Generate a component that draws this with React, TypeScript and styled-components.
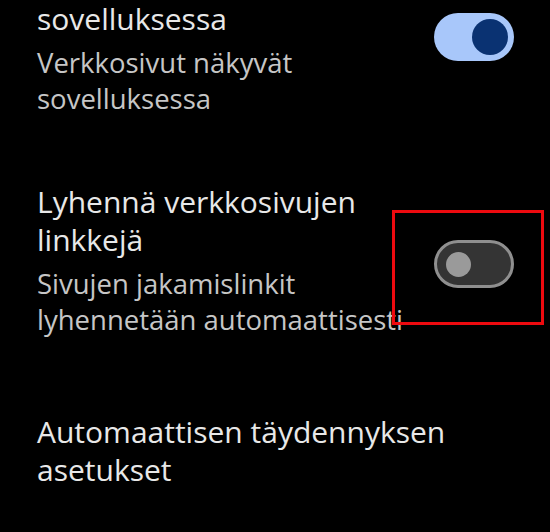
import React from "react";
import styled, { createGlobalStyle } from "styled-components";

const Global = createGlobalStyle`
  html, body {
    margin: 0;
    padding: 0;
    background: #000;
  }
  body {
    width: 550px;
    height: 532px;
    overflow: hidden;
    font-family: "Open Sans", Roboto, "Noto Sans", "Liberation Sans", sans-serif;
    -webkit-font-smoothing: antialiased;
  }
`;

const Screen = styled.div`
  position: relative;
  width: 550px;
  height: 532px;
  overflow: hidden;
  background: #000;
`;

const List = styled.div`
  display: flex;
  flex-direction: column;
`;

const Row = styled.div<{ $align?: "start" | "center"; $top?: number }>`
  display: flex;
  align-items: ${(p) => (p.$align === "start" ? "flex-start" : "center")};
  padding: ${(p) => (p.$top ?? 33)}px 36px 33px 37px;
`;

const TextCol = styled.div`
  flex: 1;
  min-width: 0;
  display: flex;
  flex-direction: column;
  gap: 7px;
`;

const Title = styled.div`
  font-size: 30px;
  line-height: 38px;
  color: #e8e8e8;
  font-weight: 400;
`;

const Subtitle = styled.div`
  font-size: 27.5px;
  line-height: 36px;
  color: #c6c6c6;
  font-weight: 400;
`;

const Track = styled.div<{ $on: boolean; $offset?: number }>`
  flex: none;
  box-sizing: border-box;
  width: 80px;
  height: 48px;
  margin-left: 12px;
  border-radius: 24px;
  display: flex;
  align-items: center;
  justify-content: ${(p) => (p.$on ? "flex-end" : "flex-start")};
  padding: ${(p) => (p.$on ? "0 6px" : "0 9px")};
  background: ${(p) => (p.$on ? "#a8c7fa" : "#343434")};
  border: ${(p) => (p.$on ? "none" : "3px solid #8f8f8f")};
  margin-top: ${(p) => (p.$offset ? `${p.$offset}px` : "0")};
`;

const Thumb = styled.div<{ $on: boolean }>`
  width: ${(p) => (p.$on ? "36px" : "25px")};
  height: ${(p) => (p.$on ? "36px" : "25px")};
  border-radius: 50%;
  background: ${(p) => (p.$on ? "#0a3272" : "#9a9a9a")};
`;

const Highlight = styled.div`
  position: absolute;
  left: 392px;
  top: 210px;
  width: 152px;
  height: 115px;
  box-sizing: border-box;
  border: 3px solid #ee0a0f;
  pointer-events: none;
`;

const Switch = ({ on, offset }: { on: boolean; offset?: number }) => (
  <Track $on={on} $offset={offset} role="switch" aria-checked={on}>
    <Thumb $on={on} />
  </Track>
);

export default function App() {
  return (
    <>
      <Global />
      <Screen>
        <List>
          <Row $align="start" $top={0}>
            <TextCol>
              <Title>sovelluksessa</Title>
              <Subtitle>Verkkosivut näkyvät sovelluksessa</Subtitle>
            </TextCol>
            <Switch on offset={13} />
          </Row>
          <Row>
            <TextCol>
              <Title>Lyhennä verkkosivujen linkkejä</Title>
              <Subtitle>Sivujen jakamislinkit lyhennetään automaattisesti</Subtitle>
            </TextCol>
            <Switch on={false} offset={7} />
          </Row>
          <Row $top={42}>
            <TextCol>
              <Title>Automaattisen täydennyksen asetukset</Title>
            </TextCol>
          </Row>
        </List>
        <Highlight />
      </Screen>
    </>
  );
}
